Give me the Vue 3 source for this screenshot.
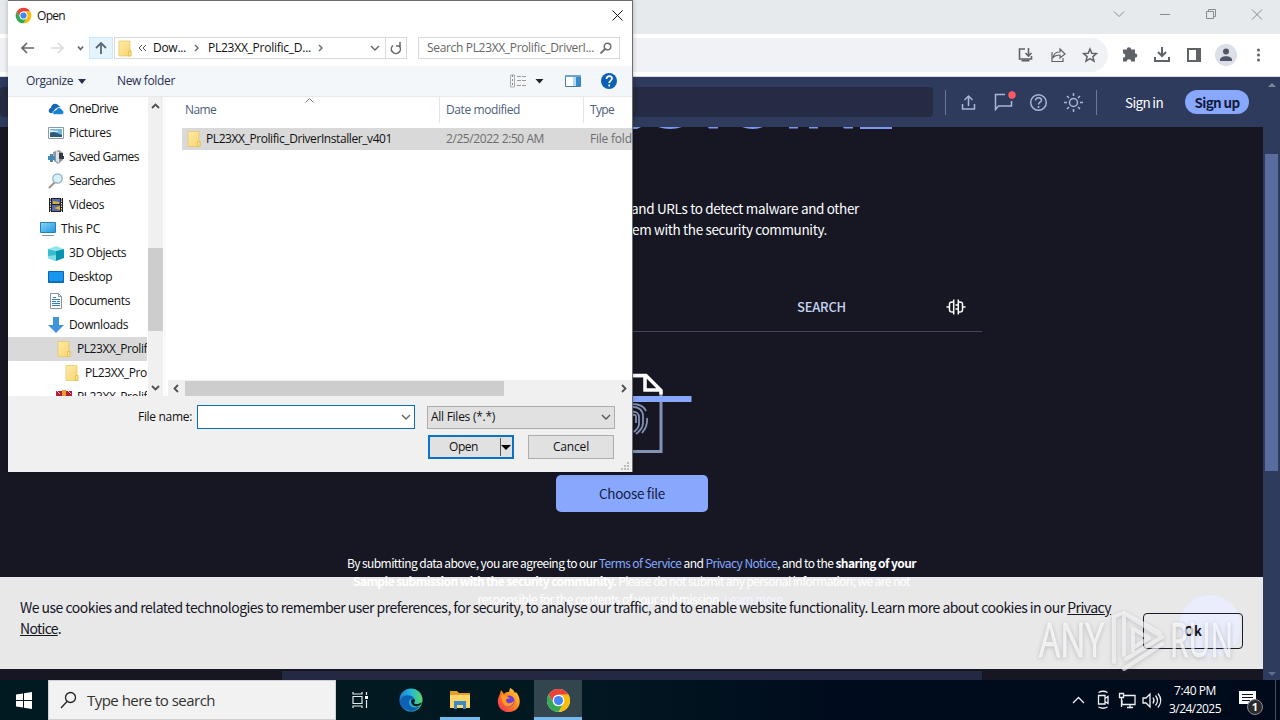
<script setup>
const tree = [
  { label: 'OneDrive', icon: 'i-cloud', pad: 40, w: 49 },
  { label: 'Pictures', icon: 'i-picture', pad: 40, w: 42 },
  { label: 'Saved Games', icon: 'i-games', pad: 40, w: 70 },
  { label: 'Searches', icon: 'i-lens', pad: 40, w: 46 },
  { label: 'Videos', icon: 'i-video', pad: 40, w: 35 },
  { label: 'This PC', icon: 'i-pc', pad: 32, w: 39 },
  { label: '3D Objects', icon: 'i-cube', pad: 40, w: 57 },
  { label: 'Desktop', icon: 'i-desktop', pad: 40, w: 43 },
  { label: 'Documents', icon: 'i-doc', pad: 40, w: 61 },
  { label: 'Downloads', icon: 'i-down', pad: 40, w: 59 },
  { label: 'PL23XX_Prolific', icon: 'i-folder', pad: 48, w: 78, selected: true },
  { label: 'PL23XX_Prolific', icon: 'i-folder', pad: 56, w: 79 },
  { label: 'PL23XX_Prolific', icon: 'i-rar', pad: 48, w: 78 }
]

// Tracks a label so that it occupies the given width in pixels.
const vFit = {
  mounted(el, { value }) {
    const natural = el.getBoundingClientRect().width
    el.style.letterSpacing = (value - natural) / el.textContent.length + 'px'
  }
}
</script>

<template>
  <div class="desktop">
    <svg class="defs" width="0" height="0">
      <linearGradient id="g-fold" x1="0" x2="1" y2="1"><stop offset="0" stop-color="#fdeba9" /><stop offset="1" stop-color="#f8d46c" /></linearGradient>
      <linearGradient id="g-edge" x1="0" x2="1"><stop offset="0" stop-color="#1580d3" /><stop offset=".5" stop-color="#25b6d9" /><stop offset="1" stop-color="#5bd763" /></linearGradient>
      <linearGradient id="g-fox" x1="1" y1="0" x2="0" y2="1"><stop offset="0" stop-color="#ffe14a" /><stop offset=".45" stop-color="#ff8a1c" /><stop offset="1" stop-color="#f0245f" /></linearGradient>
      <linearGradient id="g-screen" x2="1" y2="1"><stop offset="0" stop-color="#83d7f8" /><stop offset="1" stop-color="#2396dd" /></linearGradient>
      <symbol id="i-folder" viewBox="0 0 16 16"><path d="M2 .5h11v9l1 1v5H2z" fill="url(#g-fold)" stroke="#e9c25b" stroke-width=".7" /><path d="M11.500 10.500H14V15.500h-2.500z" fill="#fbe08a" stroke="#dfb03c" stroke-width=".6" /></symbol>
      <symbol id="i-cloud" viewBox="0 0 16 16"><path d="M1 11c-1-2 1-4 2-4 0-4 5-6 8-2l2 1c-4 0-7 2-8 6H2z" fill="#1565b8" /><path d="M5 13c-1-3 2-4 3-4 1-3 5-3 6 0 2 0 2.500 4 0 4.500H6z" fill="#1683d8" stroke="#fff" stroke-width=".6" /></symbol>
      <symbol id="i-picture" viewBox="0 0 16 16"><path d="M.5 2.500h15v11H.5z" fill="#fff" stroke="#8c9aa3" /><path d="M2 4h12v8H2z" fill="#6fb7e3" /><path d="M2 8l4-1 8 3v2H2z" fill="#2d5c74" /><path d="M2 5l8 1v1H2z" fill="#d4edf8" /></symbol>
      <symbol id="i-games" viewBox="0 0 16 16"><path d="M5 3l6-2 4 3v7l-5 4-4-3z" fill="#8d979c" /><path d="M8 2l3 1v11l-3-2z" fill="#dce2e5" /><path d="M11 4h4v3h1v3h-5z" fill="#343a3d" /><path d="M0 7h2V5h3v2h2v4H5v2H2v-2H0z" fill="#4289b6" /></symbol>
      <symbol id="i-lens" viewBox="0 0 16 16"><path d="M6.500 9.500l-5 5" stroke="#aa9384" stroke-width="2" stroke-linecap="round" /><circle cx="9.500" cy="5.500" r="4.700" fill="#d8effc" stroke="#8cacc8" stroke-width="1.200" /></symbol>
      <symbol id="i-video" viewBox="0 0 16 16"><path d="M1 1h14v14H1z" fill="#222" /><path d="M4 2h8v5H4zm0 6h8v6H4z" fill="#5b68ae" /><path d="M5 4l6 1v2H5zm1 7l6-2v4z" fill="#d6b629" /><path d="M2.500 1v14m11-14v14" stroke="#ddd" stroke-dasharray="1.500 1" /></symbol>
      <symbol id="i-pc" viewBox="0 0 16 16"><path d="M.5 1.500h15v10H.5z" fill="url(#g-screen)" stroke="#2580b3" /><path d="M2 14.500h12" stroke="#8097a5" /></symbol>
      <symbol id="i-cube" viewBox="0 0 16 16"><path d="M0 4l8-3 8 3-8 2z" fill="#92e6ef" /><path d="M0 4l8 2v10l-8-3z" fill="#39bcd0" /><path d="M8 6l8-2v9l-8 3z" fill="#0794ae" /><path d="M0 11l8-1v6l-8-3z" fill="#7fdde6" /></symbol>
      <symbol id="i-desktop" viewBox="0 0 16 16"><path d="M.5 2.500h15v11H.5z" fill="#1696f0" stroke="#0967b5" /><path d="M1 12.500h14" stroke="#0b62ac" stroke-dasharray="2 1" /></symbol>
      <symbol id="i-doc" viewBox="0 0 16 16"><path d="M2.500.5h8l3 3v12h-11z" fill="#fff" stroke="#89969b" /><path d="M10.500.5v3h3" fill="none" stroke="#89969b" /><path d="M5 4.500h3M4 6.500h8M4 8.500h4m1 0h3M4 10.500h8M4 12.500h8" stroke="#3482b5" /></symbol>
      <symbol id="i-down" viewBox="0 0 16 16"><path d="M5 0h6v8h5l-8 8-8-8h5z" fill="#3f93dc" /></symbol>
      <symbol id="i-rar" viewBox="0 0 16 16"><path d="M0 2h16v5H0z" fill="#b81d32" /><path d="M0 7h16v5H0z" fill="#365e93" /><path d="M6 1h4v14H6z" fill="#eb9c32" /><path d="M1 2l3 3m8-3l3 3" stroke="#fbb" /></symbol>
      <symbol id="i-chrome" viewBox="0 0 24 24"><circle cx="12" cy="12" r="11" fill="#fff" /><path d="M2.470 6.500A11 11 0 0 1 21.530 6.500H12A5.500 5.500 0 0 0 7.240 14.750z" fill="#ea4335" /><path d="M21.530 6.500A11 11 0 0 1 12 23l4.760-8.250A5.500 5.500 0 0 0 12 6.500z" fill="#fbbc05" /><path d="M12 23A11 11 0 0 1 2.470 6.500l4.770 8.250a5.500 5.500 0 0 0 9.520 0z" fill="#34a853" /><circle cx="12" cy="12" r="5.500" fill="#fff" /><circle cx="12" cy="12" r="4.400" fill="#4285f4" /></symbol>
      <symbol id="i-v" viewBox="0 0 10 10"><path d="M1 3l4 4 4-4" fill="none" stroke="currentColor" stroke-width="1.400" /></symbol>
    </svg>

    <!-- Browser window -->
    <div class="browser">
      <div class="tabstrip">
        <svg width="170" height="34" viewBox="0 0 170 34" fill="none" stroke="#858b90"><path d="M4 11.500l5 5 5-5M50 14.500h10" /><path d="M96.500 11.500h7v7h-7zM98.500 11.500v-2h7v7h-2M142 9.500l10 10m0-10l-10 10" /></svg>
      </div>
      <div class="toolbar">
        <div class="omnibox">
          <svg width="91" height="34" viewBox="0 0 91 34" fill="none" stroke="#5f6368" stroke-width="1.600">
            <path d="M8 11H2.500v10h12v-3M11.500 10v8m-3-3l3 3 3-3" /><path d="M4.500 22.500h8" stroke-width="2" />
            <path d="M35 14v9.500h11V20M36 20c1-5 3-6 7-6v-3l5 5-5 4v-3c-3 0-5 0-7 3z" stroke-width="1.200" />
            <path d="M73 11l1.800 4.200 4.600.4-3.500 3 1.100 4.500-4-2.400-4 2.400 1.100-4.500-3.500-3 4.600-.4z" stroke-width="1.500" />
          </svg>
        </div>
        <svg class="tools" width="150" height="34" viewBox="0 0 150 34" fill="#5f6368">
          <path d="M2 12h4c-.8-3 4.800-3 4 0h4v4c3-.8 3 4.800 0 4v4h-4c.8-3-4.800-3-4 0H2v-4c3 .8 3-4.800 0-4z" transform="translate(0 -.5)" />
          <path d="M41 9v9m-4-4l4 4 4-4M34 19v4h14v-4" fill="none" stroke="#5f6368" stroke-width="2" />
          <path d="M66 10h14v14H66zm2 2v10h7V12z" fill-rule="evenodd" />
          <circle cx="105" cy="17" r="11" fill="#dcdee8" /><circle cx="105" cy="13.500" r="3" fill="#4d5567" /><path d="M99 22c0-5 12-5 12 0v1H99z" fill="#4d5567" />
          <circle cx="137.500" cy="12" r="1.500" /><circle cx="137.500" cy="17" r="1.500" /><circle cx="137.500" cy="22" r="1.500" />
        </svg>
      </div>

      <div class="page">
        <div class="site">
          <header class="site-head">
            <div class="site-search"></div>
            <svg width="152" height="50" viewBox="0 0 152 50" fill="none" stroke="#a9b7dc" stroke-width="1.500">
              <path d="M.5 13v25M151.500 13v25" stroke="#6779a2" stroke-width="1" />
              <path d="M23.500 29V19m-4 4l4-4 4 4M17.500 27v5h12v-5" />
              <path d="M60 17.500H50.500V32.500l3-3.500H66.500V24" /><circle cx="67" cy="18" r="3.700" fill="#ff5a60" stroke="none" />
              <circle cx="93.500" cy="25.500" r="7.800" /><path d="M90.500 23.500c0-4 6-3.500 6-.3 0 2-3 2-3 4.300m0 1.500v2" />
              <circle cx="128.500" cy="25.500" r="4" /><path d="M128.500 16v3m0 13v3M119 25.500h3m13 0h3M122 19l2 2m9 9l2 2m0-13l-2 2m-9 9l-2 2" />
            </svg>
            <span class="signin"><span v-fit="38">Sign in</span></span>
            <span class="signup"><b v-fit="45">Sign up</b></span>
          </header>

          <main>
            <svg class="logo-edge" width="264" height="3" viewBox="0 0 264 3" fill="#7f95e8"><path d="M0 0h9L5 2H0zM26 0h24q-12 4-24 0zM76 0h10v1.500H77zM110 0h21q-10 4-21 0zM157 0h9v1.500h-9zM177 0h9v1.500h-9zM211 0h10v1.500h-9zM228 0h32v2h-32z" /></svg>
            <p class="intro one"><span v-fit="228">and URLs to detect malware and other</span></p>
            <p class="intro two"><span v-fit="195">em with the security community.</span></p>
            <div class="tabs">
              <b v-fit="49">SEARCH</b>
              <svg width="20" height="18" viewBox="0 0 20 18" fill="none" stroke="#fff" stroke-width="1.500"><path d="M.5 9h3M7.700 1.500v15M7.700 4C2.500 3.500 3.500 6 3.500 9s-1 5.500 4.200 5M12.300 1.500v15M12.300 4c5.200-.5 4.200 2 4.200 5s1 5.500-4.200 5M16.500 9h3M9.500 7h2.500M9.500 11h2.500" /></svg>
            </div>
            <svg class="filepic" width="120" height="84" viewBox="0 0 120 84" fill="none">
              <path d="M89 20v59.500H30V4h43" stroke="#8492b4" stroke-width="3" />
              <path d="M30 18V3.500h44l15 15v4M73 4v14h16" stroke="#fff" stroke-width="3.500" />
              <path d="M50 27h69.500" stroke="#87a8fd" stroke-width="6" />
              <g stroke="#8492b4" stroke-width="1.800"><path d="M54 35c6-5 17-3 20 4M52 44c0-12 19-12 19 0v7c0 5-3 8-7 11M56 58V45c0-7 11-7 11 0v7c0 4-3 6-5 8M60 58V45c0-3 4-3 4 0v6M75 46c1 7-2 11-5 15" /></g>
            </svg>
            <div class="choose"><span v-fit="66">Choose file</span></div>
            <p class="terms t1"><span v-fit="569">By submitting data above, you are agreeing to our <a>Terms of Service</a> and <a>Privacy Notice</a>, and to the <b>sharing of your</b></span></p>
            <p class="terms"><span v-fit="557"><b>Sample submission with the security community.</b> Please do not submit any personal information; we are not</span></p>
            <p class="terms"><span v-fit="308">responsible for the contents of your submission. <a>Learn more.</a></span></p>
            <div class="apicard"></div>
            <div class="cookie">
              <p><span v-fit="1091">We use cookies and related technologies to remember user preferences, for security, to analyse our traffic, and to enable website functionality. Learn more about cookies in our <u>Privacy</u></span><br><span v-fit="41"><u>Notice</u>.</span></p>
              <i class="halo"></i>
              <div class="ok"><b>Ok</b></div>
            </div>
          </main>
        </div>
        <div class="vscroll"><i class="up"></i><i class="thumb"></i><i class="dn"></i></div>
      </div>
    </div>

    <!-- Watermark -->
    <svg class="mark" width="200" height="66" viewBox="0 0 200 66">
      <g fill="#fff" fill-opacity=".7" stroke="#fff" stroke-opacity=".5"><text x="1" y="49" textLength="65" lengthAdjust="spacingAndGlyphs">ANY</text><text x="132" y="49" textLength="63" lengthAdjust="spacingAndGlyphs">RUN</text></g>
      <g fill="none" stroke="#fff" stroke-opacity=".6" stroke-width="4" stroke-linejoin="round" stroke-linecap="round"><path d="M76 54V9l6-3M86 47V5l38 24-36 22M86 5l36 20M86 61l38-25M95 43V21l16 9-16 10" /></g>
    </svg>

    <!-- File dialog -->
    <section class="dialog">
      <div class="d-title">
        <svg width="17" height="17"><use href="#i-chrome" /></svg><span v-fit="28">Open</span>
        <svg class="d-x" width="11" height="11" stroke="#111"><path d="M.5.5l10 10m0-10l-10 10" /></svg>
      </div>
      <div class="d-nav">
        <svg class="arrows" width="81" height="24" fill="none" stroke="#666" stroke-width="1.700"><path d="M14 12h12M19 7l-5 5 5 5" /><path d="M43 12h12m-5-5l5 5-5 5" stroke="#dadada" /><path d="M70 10.500l2.500 3 2.500-3" /></svg>
        <div class="upbtn"><svg width="12" height="14" fill="none" stroke="#5b6873" stroke-width="1.800"><path d="M6 13V2M1 7l5-5 5 5" /></svg></div>
        <div class="crumbs">
          <svg class="cf" width="16" height="17"><use href="#i-folder" /></svg>
          <svg class="ca" width="10" height="8" fill="none" stroke="#555"><path d="M4 1L1 4l3 3M8 1L5 4l3 3" /></svg>
          <span class="c1"><span v-fit="33">Dow...</span></span>
          <svg class="sep1" width="6" height="8" fill="none" stroke="#666" stroke-width="1.400"><path d="M1 1l3 3-3 3" /></svg>
          <span class="c2"><span v-fit="103">PL23XX_Prolific_D...</span></span>
          <svg class="sep2" width="6" height="8" fill="none" stroke="#666" stroke-width="1.400"><path d="M1 1l3 3-3 3" /></svg>
          <svg class="cv" width="10" height="10"><use href="#i-v" /></svg>
          <div class="refresh"><svg width="12" height="13" fill="none" stroke="#666" stroke-width="1.500"><path d="M3 3.500a4.500 4.500 0 1 0 6.500.8M6 4h4V0" /></svg></div>
        </div>
        <div class="d-search"><span v-fit="167">Search PL23XX_Prolific_DriverI...</span><svg width="12" height="12" fill="none" stroke="#6b6b6b" stroke-width="1.400"><circle cx="7.500" cy="4.500" r="3.300" /><path d="M5 7l-4.500 4.500" stroke-width="1.800" /></svg></div>
      </div>
      <div class="d-tools">
        <span class="org"><span v-fit="47">Organize</span></span><i class="tri"></i>
        <span class="newf"><span v-fit="58">New folder</span></span>
        <svg width="110" height="20" fill="none">
          <path d="M.5 4h4v12h-4z" stroke="#aaa" /><path d="M2.500 4v12" stroke="#888" stroke-dasharray="2 2" /><path d="M7 5.500h4m1 0h4M7 9.500h4m1 0h4M7 14.500h4m1 0h4" stroke="#999" />
          <path d="M25.500 8h8l-4 4.500z" fill="#222" />
          <path d="M55.500 4.500h15v11h-15z" fill="#fff" stroke="#4c7c9d" /><path d="M55 4h16v2H55z" fill="#6ba5c9" /><path d="M63 6h3v9h-3z" fill="#b5d9f0" /><path d="M66 6h4v9h-4z" fill="#358cce" />
          <circle cx="99" cy="10" r="8" fill="#0b60b5" /><path d="M96.500 8c0-4 5.500-3.500 5.500-.4 0 2-2.800 2-2.800 4.400m0 1.500v2" stroke="#fff" stroke-width="1.700" />
        </svg>
      </div>
      <div class="d-body">
        <div class="tree">
          <div v-for="(n, i) in tree" :key="i" class="node" :class="{ sel: n.selected }" :style="{ paddingLeft: n.pad + 'px' }">
            <svg width="16" height="16"><use :href="'#' + n.icon" /></svg><span v-fit="n.w">{{ n.label }}</span>
          </div>
        </div>
        <div class="t-scroll">
          <svg width="9" height="6" fill="none" stroke="#505050" stroke-width="1.800"><path d="M1 5l3.500-3.500L8 5" /></svg>
          <i></i>
          <svg width="9" height="6" fill="none" stroke="#505050" stroke-width="1.800"><path d="M1 1l3.500 3.500L8 1" /></svg>
        </div>
        <div class="list">
          <svg class="sort" width="9" height="5" fill="none" stroke="#777"><path d="M.5 4.500l4-4 4 4" /></svg>
          <div class="cols">
            <span><span v-fit="31">Name</span></span><span><span v-fit="74">Date modified</span></span><span><span v-fit="24">Type</span></span>
          </div>
          <div class="file">
            <svg width="16" height="16"><use href="#i-folder" /></svg>
            <span class="f1"><span v-fit="186">PL23XX_Prolific_DriverInstaller_v401</span></span>
            <span class="f2"><span v-fit="98">2/25/2022 2:50 AM</span></span>
            <span class="f3"><span v-fit="53">File folder</span></span>
          </div>
          <div class="h-scroll">
            <svg width="6" height="9" fill="none" stroke="#505050" stroke-width="1.800"><path d="M5 1L1.500 4.500 5 8" /></svg>
            <i></i>
            <svg width="6" height="9" fill="none" stroke="#505050" stroke-width="1.800"><path d="M1 1l3.500 3.500L1 8" /></svg>
          </div>
        </div>
      </div>
      <div class="d-foot">
        <div class="frow">
          <span class="lab"><span v-fit="54">File name:</span></span>
          <div class="finput"><svg width="10" height="10"><use href="#i-v" /></svg></div>
          <div class="fsel"><span v-fit="64">All Files (*.*)</span><svg width="10" height="10"><use href="#i-v" /></svg></div>
        </div>
        <div class="brow">
          <div class="open"><span v-fit="29">Open</span><i></i></div>
          <div class="cancel"><span v-fit="36">Cancel</span></div>
        </div>
        <svg class="grip" width="9" height="9" fill="#bcbcbc"><path d="M6 0h2v2H6zM3 3h2v2H3zm3 0h2v2H6zM0 6h2v2H0zm3 0h2v2H3zm3 0h2v2H6z" /></svg>
      </div>
    </section>

    <!-- Taskbar -->
    <footer class="taskbar">
      <div class="start"><svg width="16" height="17" fill="#fff"><path d="M0 2.500l7-1V8H0zM8 1.300L16 0v8H8zM0 9h7v6.500l-7-1zM8 9h8v8l-8-1.300z" /></svg></div>
      <div class="tsearch"><svg width="18" height="18" fill="none" stroke="#222" stroke-width="1.300"><circle cx="10.500" cy="6.500" r="5" /><path d="M7 10.500L1 17" /></svg><span v-fit="128">Type here to search</span></div>
      <div class="app view"><svg width="18" height="18" viewBox="0 0 18 18" fill="none" stroke="#e4ecee" stroke-width="1.200"><path d="M2 5.500h9v7H2zM2 1v2h9V1M2 17v-2h9v2M15.500 1v3m0 5v8" /><path d="M14 5h3v3h-3z" fill="#fff" stroke="none" /></svg></div>
      <div class="app edge"><svg width="24" height="24" viewBox="0 0 24 24"><circle cx="12" cy="12" r="11.500" fill="url(#g-edge)" /><path d="M1 13C2 6 14 5 16 12c-1-2-6-2-6 2 0 5 6 7 11 4-3 5-9 6-13 4-4-1-7-4-7-9z" fill="#0f5fb4" /><path d="M12 13c0-2 3-3 4-1 0 2-1 2-1 3 1 2 6 1 8-1-1 6-11 6-11-1z" fill="#06202c" /></svg></div>
      <div class="app run"><svg width="22" height="20" viewBox="0 0 22 20"><path d="M1 1h7l2 2h11v4H1z" fill="#e59e2c" /><path d="M1 5h20v13H1z" fill="#ffd568" /><path d="M5 11h12v8h-3v-4H8v4H5z" fill="#398ac7" /></svg></div>
      <div class="app"><svg width="24" height="26" viewBox="0 0 24 26"><path d="M3 7l1-4 3 4c2-2 3-2 5-2l1-4c3 1 4 3 5 5l1-1c7 8 4 20-7 20C2 25-2 16 3 7z" fill="url(#g-fox)" /><circle cx="12" cy="14" r="5.500" fill="#6e3cd6" /><path d="M4 8c4 0 7 1 9 4-3-1-4 0-4 2 2 4 6 2 8 0 0 5-8 8-11 2z" fill="#ff9b22" /></svg></div>
      <div class="app active"><svg width="25" height="25"><use href="#i-chrome" /></svg></div>
      <svg class="tray" width="96" height="40" fill="none" stroke="#eef1f5" stroke-width="1.300">
        <path d="M4 23l5.500-5.500L15 23" />
        <path d="M29.500 15.500h6.500v8.500h-6.500zM36 18.500l3-2v7l-3-2M29.500 12.500q4.500-2.500 9 0M29.500 27q4.500 2.500 9 0" />
        <path d="M55 15.500h11v9H53V20M58 27.500h6M61 24v3M50.500 13.500h4v4h-4zM52.500 17.500V27" />
        <path d="M74 18h3l4-4v13l-4-4h-3zM84 17.500q2 3 0 6M86.500 15.500q4 5 0 10M89 13.500q5.500 7 0 14" />
      </svg>
      <div class="clock"><span v-fit="42">7:40 PM</span><span v-fit="52">3/24/2025</span></div>
      <div class="notif"><svg width="17" height="17"><path d="M0 0h17v13h-4v4l-4-4H0z" fill="#fff" /><path d="M3 3.500h11M3 6.500h11M3 9.500h8" stroke="#0a1020" /></svg><b>1</b></div>
      <i class="peek"></i>
    </footer>
  </div>
</template>

<style>
html, body { margin: 0; overflow: hidden; }
</style>

<style scoped>
* { box-sizing: border-box; }
p { margin: 0; }
svg { display: block; flex: none; }
span, b { white-space: nowrap; }
.defs { position: absolute; }
.desktop { position: relative; width: 1280px; height: 720px; overflow: hidden; background: #161723; font-family: "Open Sans", "Noto Sans", sans-serif; font-size: 12px; }

.browser { height: 680px; display: flex; flex-direction: column; }
.tabstrip { height: 34px; background: #e7eaed; display: flex; justify-content: flex-end; }
.toolbar { height: 43px; background: #fff; border-bottom: 1px solid #d6dae6; display: flex; padding-top: 4px; }
.omnibox { width: 1108px; height: 34px; background: #f1f2f5; border-radius: 0 17px 17px 0; display: flex; justify-content: flex-end; }
.tools { margin-left: 13px; }
.page { flex: 1; display: flex; min-height: 0; font-family: "Noto Sans CJK SC", "Open Sans", sans-serif; }
.site { width: 1263px; display: flex; flex-direction: column; }
.site-head { height: 50px; background: #2e3b5c; display: flex; align-items: center; color: #fff; font-size: 13.500px; flex: none; }
.site-search { width: 933px; height: 30px; border-radius: 4px; background: #242b42; margin-right: 12px; }
.signin { margin-left: 28px; width: 60px; padding-bottom: 1px; }
.signup { width: 64px; height: 24px; border-radius: 12px; background: #87a8fd; color: #15193a; display: flex; align-items: center; justify-content: center; padding-bottom: 1px; }
main { flex: 1; position: relative; background: #161723; color: #fff; display: flex; flex-direction: column; overflow: hidden; }
.logo-edge { margin: 0 0 1px 632px; }
.intro { font-size: 13.500px; line-height: 21px; padding-left: 632px; }
.intro.one { padding-top: 67px; padding-left: 631px; }
.tabs { margin: 53px 0 0 282px; width: 700px; height: 39px; border-bottom: 1px solid #42475a; display: flex; align-items: flex-start; padding: 4px 16px 0 515px; justify-content: space-between; color: #c6d2f2; font-size: 13px; line-height: 20px; flex: none; }
.tabs b { font-weight: 500; margin-top: -.5px; }
.tabs svg { margin-top: 1px; }
.filepic { margin: 40px 0 0 572px; }
.choose { margin: 19px 0 0 556px; width: 152px; height: 37px; border-radius: 5px; background: #87a8fd; color: #171b42; font-size: 13.500px; display: flex; align-items: center; justify-content: center; flex: none; padding-bottom: 2px; }
.terms { text-align: center; font-size: 12px; line-height: 18px; }
.terms.t1 { margin-top: 42px; }
.terms a { color: #87a8fd; }
.apicard { position: absolute; left: 282px; bottom: 0; width: 700px; height: 9px; background: #222940; }
.cookie { position: absolute; left: 0; top: 450px; width: 1263px; height: 92px; background: rgba(255, 255, 255, .9); color: #15161f; font-size: 14px; line-height: 21px; }
.cookie p { padding: 20px; }
.halo { position: absolute; left: 1179px; top: 18px; width: 62px; height: 62px; border-radius: 50%; background: #e9edfc; }
.ok { position: absolute; left: 1143px; top: 36px; width: 100px; height: 36px; border: 1px solid #1c1d28; border-radius: 4px; display: flex; align-items: center; justify-content: center; font-size: 13px; padding-bottom: 1px; }
.vscroll { width: 17px; background: #2e3b5c; display: flex; flex-direction: column; align-items: center; padding: 6px 0 4px; }
.up, .dn { border: 4px solid transparent; height: 0; width: 0; }
.up { border-top: 0; border-bottom-color: #7d879d; }
.dn { border-bottom: 0; border-top-color: #5d6c92; margin-top: auto; }
.thumb { width: 13px; height: 317px; background: #5a6c9f; margin-top: 67px; }
.mark { position: absolute; left: 1038px; top: 608px; font-family: "Open Sans", sans-serif; font-size: 48px; font-weight: 400; filter: drop-shadow(0 1px 2px rgba(70, 70, 80, .4)); }

.dialog { position: absolute; left: 8px; top: 0; width: 625px; height: 472px; background: #fff; border: solid #6c6d72; border-width: 1px 1px 0 0; color: #111; display: flex; flex-direction: column; line-height: 16px; box-shadow: 0 0 5px rgba(0, 0, 0, .25); }
.d-title { height: 30px; display: flex; align-items: center; padding: 0 9px 1px 7px; gap: 5px; }
.d-x { margin-left: auto; }
.d-nav { height: 35px; display: flex; align-items: center; padding-bottom: 1px; }
.upbtn { width: 24px; height: 22px; background: #e5f3ff; border: 1px solid #cce8ff; display: flex; align-items: center; justify-content: center; }
.crumbs { width: 293px; height: 22px; margin-left: 1px; border: 1px solid #d9d9d9; display: flex; align-items: center; }
.cf { margin-left: 2px; }
.ca { margin-left: 5px; }
.c1 { margin-left: 5px; width: 33px; }
.sep1 { margin-left: 8px; }
.c2 { margin-left: 8px; width: 103px; }
.sep2 { margin-left: 7px; }
.cv { margin-left: 46px; color: #666; }
.refresh { margin-left: auto; width: 21px; height: 20px; border-left: 1px solid #d9d9d9; display: flex; align-items: center; justify-content: center; }
.d-search { margin-left: 11px; width: 202px; height: 22px; border: 1px solid #d9d9d9; color: #666; display: flex; align-items: center; justify-content: space-between; padding: 0 7px 0 8px; }
.d-tools { height: 31px; background: #f4f7fa; border-bottom: 1px solid #e6eaee; display: flex; align-items: center; color: #27304f; padding-left: 18px; }
.org { width: 47px; }
.tri { margin-left: 5px; border: 4px solid transparent; border-top: 5px solid #27304f; border-bottom: 0; }
.newf { margin-left: 31px; width: 58px; margin-right: 335px; }
.d-body { height: 299px; display: flex; overflow: hidden; }
.tree { width: 139px; overflow: hidden; flex: none; }
.node { height: 24px; display: flex; align-items: center; gap: 5px; }
.node.sel { background: #d9d9d9; }
.t-scroll { width: 15px; margin: 0 1px; background: #f0f0f0; display: flex; flex-direction: column; align-items: center; padding: 6px 0 5px; flex: none; }
.t-scroll i { width: 15px; height: 83px; background: #cdcdcd; margin: 139px 0 auto; }
.list { position: relative; width: 468px; display: flex; flex-direction: column; border-left: 2px solid #fafafa; flex: none; }
.sort { position: absolute; left: 139px; top: 1px; }
.cols { display: flex; height: 26px; color: #4c607a; }
.cols > span { padding: 5px 0 0 6px; border-right: 1px solid #e5e5e5; flex: none; }
.cols > span:nth-child(1) { width: 274px; padding-left: 19px; }
.cols > span:nth-child(2) { width: 144px; }
.cols > span:nth-child(3) { border: 0; }
.file { margin: 5px 0 0 16px; height: 22px; background: #d9d9d9; display: flex; align-items: center; padding-left: 4px; width: 450px; overflow: hidden; flex: none; }
.file > span { flex: none; }
.f1 { margin-left: 4px; width: 240px; }
.f2 { width: 144px; color: #6d6d6d; }
.f3 { color: #6d6d6d; }
.h-scroll { margin-top: auto; height: 16px; margin-left: 2px; background: #f0f0f0; display: flex; align-items: center; padding: 0 5px; flex: none; }
.h-scroll i { width: 319px; height: 15px; margin-left: 6px; margin-right: auto; background: #cdcdcd; }
.d-foot { flex: 1; background: #f0f0f0; position: relative; padding-top: 9px; }
.frow { display: flex; align-items: center; height: 24px; }
.lab { margin-left: 130px; width: 59px; }
.finput { width: 218px; height: 24px; background: #fff; border: 1px solid #0b6dbd; display: flex; justify-content: flex-end; align-items: center; padding-right: 3px; color: #666; }
.fsel { width: 188px; height: 23px; margin-left: 12px; background: #e1e1e1; border: 1px solid #adadad; display: flex; align-items: center; justify-content: space-between; padding: 0 3px; }
.fsel svg { color: #555; }
.brow { display: flex; margin: 6px 0 0 420px; gap: 14px; }
.open, .cancel { height: 24px; width: 86px; background: #e1e1e1; border: 1px solid #adadad; display: flex; align-items: center; justify-content: center; }
.open { border: 2px solid #0b72c4; justify-content: flex-start; padding-left: 19px; }
.open i { margin-left: 22px; height: 18px; width: 12px; border-left: 1px solid #555; display: flex; align-items: center; }
.open i::after { content: ""; border: 5px solid transparent; border-top-color: #000; border-bottom: 0; }
.grip { position: absolute; right: 2px; bottom: 1px; }

.taskbar { height: 40px; display: flex; align-items: stretch; background: linear-gradient(90deg, #011a22, #021821 45%, #000c1d 65%, #000a1a); color: #fff; position: relative; }
.start { width: 48px; display: flex; align-items: center; justify-content: center; }
.tsearch { width: 288px; background: #f2f2f2; border: 1px solid #d0d0d0; color: #333; font-size: 15px; display: flex; align-items: center; padding-left: 11px; gap: 9px; }
.app { width: 49px; display: flex; align-items: center; justify-content: center; }
.view { padding-right: 2px; }
.edge { margin-left: 2px; padding-right: 2px; }
.run { border-bottom: 3px solid #76b9ed; padding-top: 3px; width: 40px; margin: 0 4px; }
.active { width: 48px; background: #33464e; border-bottom: 3px solid #76b9ed; padding-top: 3px; margin-left: 1px; }
.tray { margin: 0 -4px 0 auto; }
.clock { width: 68px; display: flex; flex-direction: column; align-items: center; line-height: 18px; padding-top: 2px; }
.notif { width: 46px; padding: 11px 0 0 10px; position: relative; }
.notif b { position: absolute; left: 18px; top: 19px; width: 16px; height: 16px; border-radius: 50%; border: 1px solid #8b8d91; background: #292b2f; font-size: 11px; line-height: 14px; text-align: center; }
.peek { width: 1px; background: #4a4e58; margin-right: 4px; }
</style>
